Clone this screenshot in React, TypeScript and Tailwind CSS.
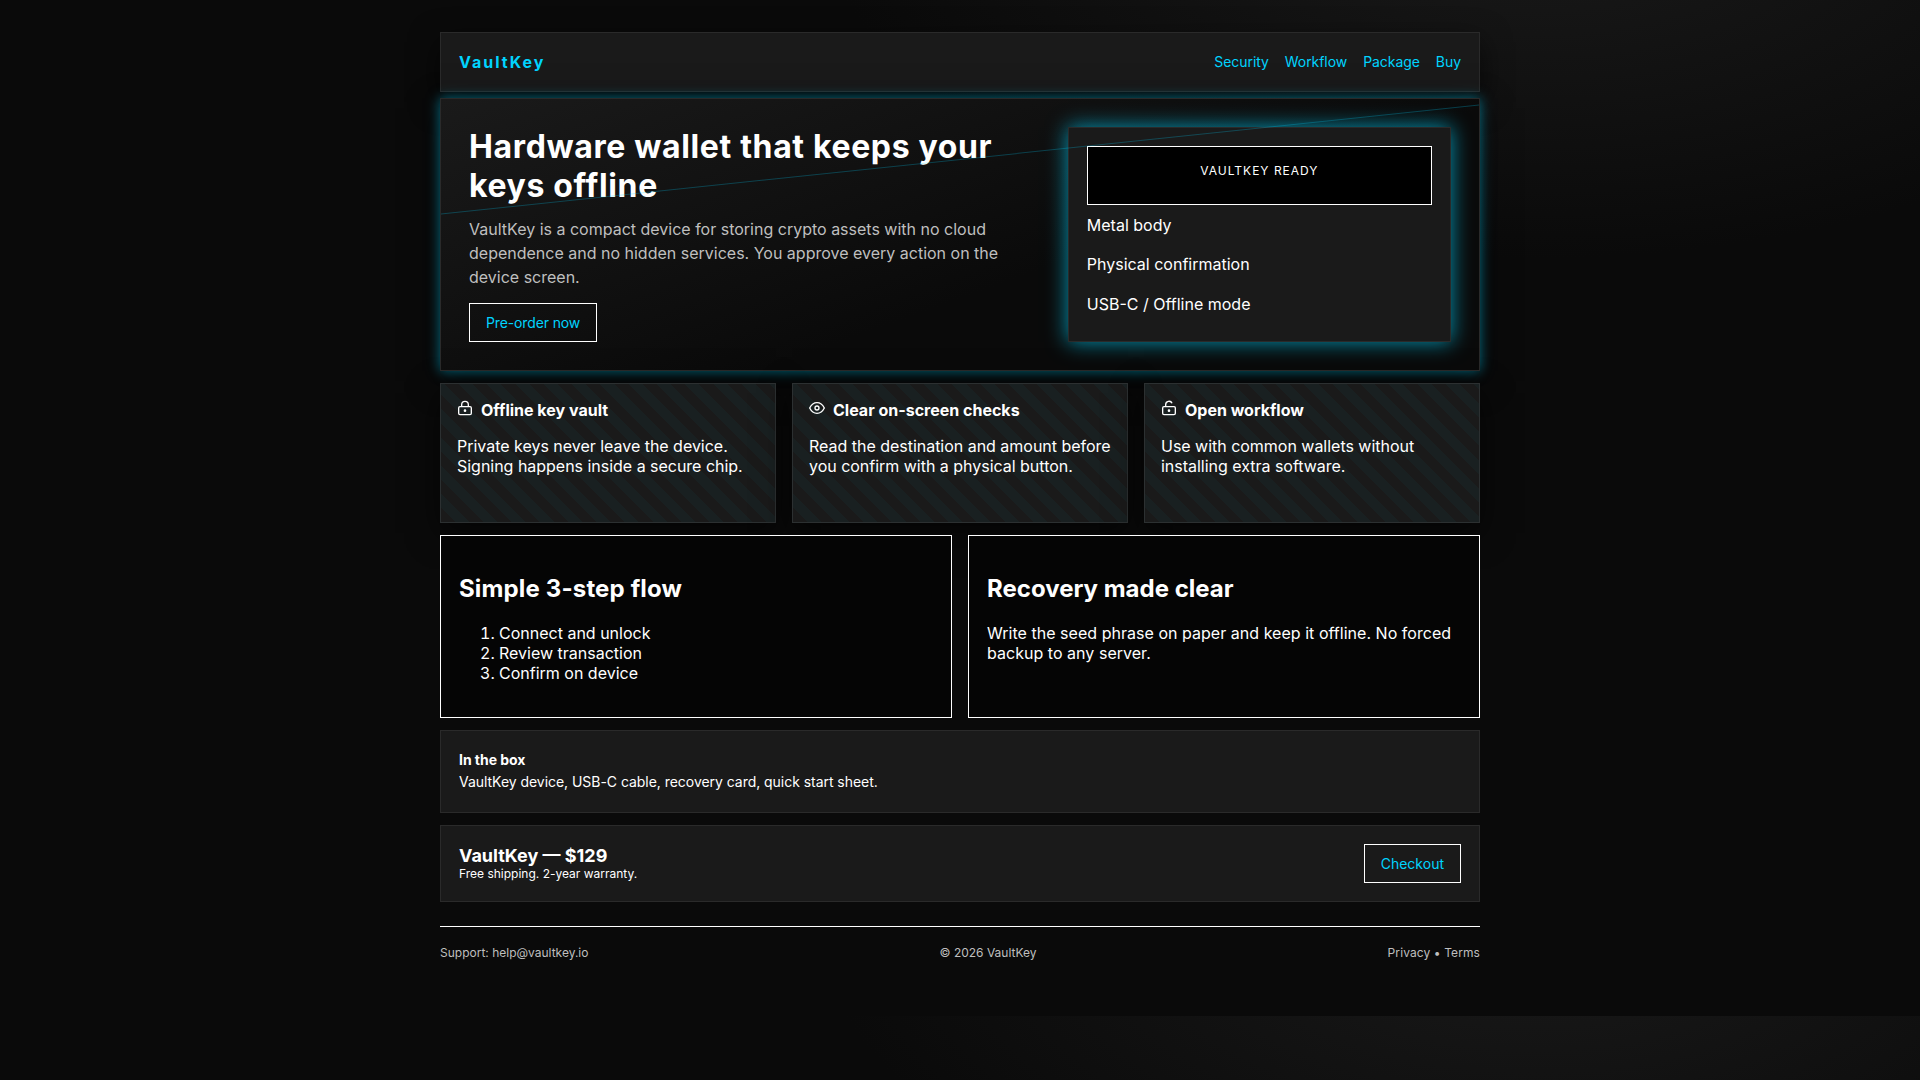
import type { ReactNode } from "react";

const navLinks = ["Security", "Workflow", "Package", "Buy"];
const specs = ["Metal body", "Physical confirmation", "USB-C / Offline mode"];
const steps = ["Connect and unlock", "Review transaction", "Confirm on device"];

function Icon({ children }: { children: ReactNode }) {
  return (
    <svg
      className="h-4 w-4 shrink-0"
      viewBox="0 0 24 24"
      fill="none"
      stroke="currentColor"
      strokeWidth="2"
    >
      {children}
    </svg>
  );
}

const features = [
  {
    title: "Offline key vault",
    text: "Private keys never leave the device. Signing happens inside a secure chip.",
    icon: (
      <>
        <rect x="2.5" y="10" width="19" height="12" rx="2" />
        <path d="M7 10V7a5 5 0 0 1 10 0v3" />
        <circle cx="12" cy="16" r="1" />
      </>
    ),
  },
  {
    title: "Clear on-screen checks",
    text: "Read the destination and amount before you confirm with a physical button.",
    icon: (
      <>
        <path d="M1 12s4-8 11-8 11 8 11 8-4 8-11 8-11-8-11-8z" />
        <circle cx="12" cy="12" r="3" />
      </>
    ),
  },
  {
    title: "Open workflow",
    text: "Use with common wallets without installing extra software.",
    icon: (
      <>
        <rect x="2.5" y="10" width="19" height="12" rx="2" />
        <path d="M7 10V7a5 5 0 0 1 9.6-2" />
        <circle cx="12" cy="16" r="1" />
      </>
    ),
  },
];

function Button({ children }: { children: ReactNode }) {
  return (
    <a
      href="#"
      className="inline-block border border-white px-4 py-2.5 text-sm/[17px] text-[#00d4ff]"
    >
      {children}
    </a>
  );
}

function Header() {
  return (
    <header className="flex h-[60px] items-center justify-between border border-[#2a2a2a] bg-[#1a1a1a] px-[18px] shadow-[0_10px_30px_rgba(0,0,0,0.6)]">
      <div className="font-bold tracking-[0.125em] text-[#00d4ff]">VaultKey</div>
      <nav className="flex gap-4 pb-0.5 text-sm/[17px] tracking-[-0.06px] text-[#00d4ff]">
        {navLinks.map((link) => (
          <a key={link} href="#">
            {link}
          </a>
        ))}
      </nav>
    </header>
  );
}

function Hero() {
  return (
    <section className="relative mt-1.5 grid grid-cols-[1.5fr_1fr] gap-6 overflow-hidden border border-[#2a2a2a] bg-[linear-gradient(160deg,#1a1a1a,#0a0a0a_60%)] p-7 shadow-[0_0_12px_rgba(0,212,255,0.5),0_10px_30px_rgba(0,0,0,0.6)]">
      <div>
        <h1 className="mb-3 text-[32px]/[39px] font-bold tracking-[0.02em]">
          Hardware wallet that keeps your keys offline
        </h1>
        <p className="mb-3.5 leading-6 text-[#bfbfbf]">
          VaultKey is a compact device for storing crypto assets with no cloud
          dependence and no hidden services. You approve every action on the
          device screen.
        </p>
        <div className="tracking-[-0.13px]">
          <Button>Pre-order now</Button>
        </div>
      </div>
      <div className="flex flex-col border border-[#2a2a2a] bg-[#1a1a1a] p-[18px] shadow-[0_0_20px_rgba(0,212,255,0.7)]">
        <div className="h-[59px] border border-white bg-black pt-4 text-center text-xs/[15px] tracking-[1px]">
          VAULTKEY READY
        </div>
        {specs.map((spec) => (
          <div key={spec} className="flex flex-1 items-center pt-[0.6px]">
            {spec}
          </div>
        ))}
      </div>
      {/* thin beam across the hero */}
      <div className="absolute top-[60px] -left-[10%] h-px w-[120%] -rotate-6 bg-[#00d4ff] opacity-25" />
    </section>
  );
}

export default function App() {
  return (
    <div className="min-h-[1080px] bg-[#0a0a0a] bg-[radial-gradient(1200px_600px_at_80%_-10%,#1a1a1a,#0a0a0a_60%)] bg-[length:100%_1016px] pt-8 font-[Inter,sans-serif] text-base/5 text-white">
      <div className="mx-auto w-[1040px]">
        <Header />
        <Hero />
        <section className="mt-3 grid grid-cols-3 gap-4">
          {features.map((f) => (
            <div
              key={f.title}
              className="relative h-[140px] border border-[#2c3031] bg-[repeating-linear-gradient(45deg,#1a1a1a_0_10px,#192021_10px_20px)] p-4 shadow-[0_10px_30px_rgba(0,0,0,0.6)]"
            >
              <div className="flex gap-2">
                <Icon>{f.icon}</Icon>
                <h3 className="font-bold">{f.title}</h3>
              </div>
              <p className="mt-4 tracking-[-0.02px]">{f.text}</p>
            </div>
          ))}
        </section>
        <section className="relative mt-3 grid grid-cols-2 gap-4">
          <div className="h-[183px] border border-white bg-[#050505] p-[18px]">
            <h2 className="my-5 text-2xl/[29px] font-bold tracking-[0.15px]">
              Simple 3-step flow
            </h2>
            <ol className="list-decimal pl-10">
              {steps.map((step) => (
                <li key={step}>{step}</li>
              ))}
            </ol>
          </div>
          <div className="h-[183px] border border-white bg-[#050505] p-[18px]">
            <h2 className="my-5 text-2xl/[29px] font-bold">Recovery made clear</h2>
            <p className="tracking-[0.03px]">
              Write the seed phrase on paper and keep it offline. No forced
              backup to any server.
            </p>
          </div>
        </section>
        <section className="mt-3 h-[83px] border border-[#2a2a2a] bg-[#1a1a1a] p-[18px] text-sm/[22px] tracking-[-0.04px]">
          <strong className="font-bold">In the box</strong>
          <p>VaultKey device, USB-C cable, recovery card, quick start sheet.</p>
        </section>
        <section className="mt-3 flex items-center justify-between border border-[#2a2a2a] bg-[#1a1a1a] p-[18px]">
          <div>
            <div className="text-lg/[22px] font-bold">VaultKey — $129</div>
            <div className="-mt-px pb-px text-xs/[15px]">
              Free shipping. 2-year warranty.
            </div>
          </div>
          <Button>Checkout</Button>
        </section>
        <footer className="mt-6 flex justify-between border-t border-white pt-[18px] text-xs/[15px] text-[#bfbfbf]">
          <div>Support: help@vaultkey.io</div>
          <div>© 2026 VaultKey</div>
          <div className="tracking-[0.1px]">Privacy • Terms</div>
        </footer>
      </div>
    </div>
  );
}
